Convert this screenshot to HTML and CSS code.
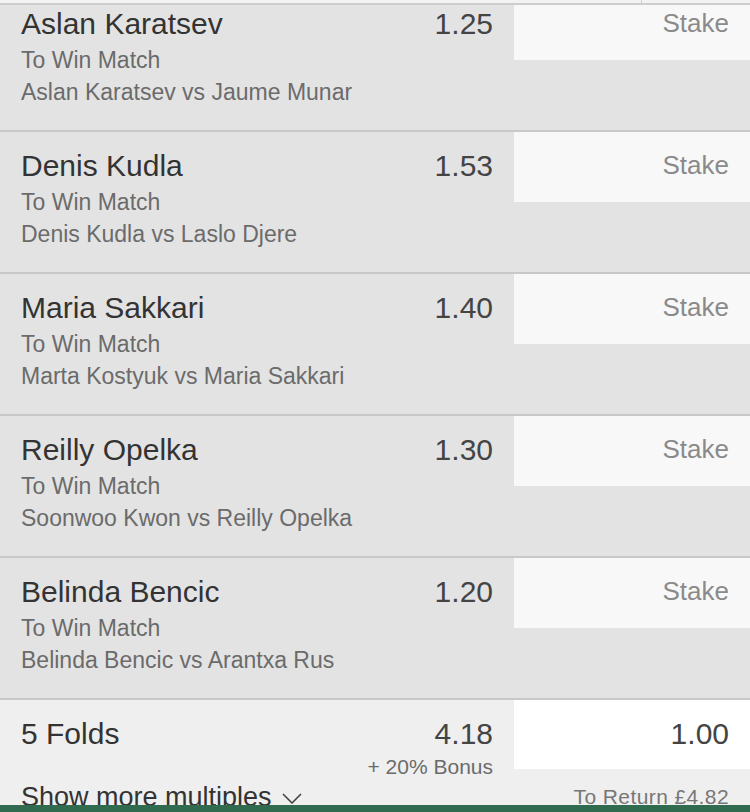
FILE: index.html
```html
<!DOCTYPE html>
<html lang="en">
<head>
    <meta charset="UTF-8">
    <meta name="viewport" content="width=device-width, initial-scale=1.0">
    <title>Bet Slip</title>
    <link rel="stylesheet" href="styles.css">
</head>
<body>

<div class="slip-top"><span class="slip-top-divider"></span></div>

<div class="slip">
    <div class="bet">
        <div class="bet-info">
            <div class="bet-line">
                <span class="selection">Aslan Karatsev</span>
                <span class="odds">1.25</span>
            </div>
            <div class="market">To Win Match</div>
            <div class="event">Aslan Karatsev vs Jaume Munar</div>
        </div>
        <div class="stake">Stake</div>
    </div>

    <div class="bet">
        <div class="bet-info">
            <div class="bet-line">
                <span class="selection">Denis Kudla</span>
                <span class="odds">1.53</span>
            </div>
            <div class="market">To Win Match</div>
            <div class="event">Denis Kudla vs Laslo Djere</div>
        </div>
        <div class="stake">Stake</div>
    </div>

    <div class="bet">
        <div class="bet-info">
            <div class="bet-line">
                <span class="selection">Maria Sakkari</span>
                <span class="odds">1.40</span>
            </div>
            <div class="market">To Win Match</div>
            <div class="event">Marta Kostyuk vs Maria Sakkari</div>
        </div>
        <div class="stake">Stake</div>
    </div>

    <div class="bet">
        <div class="bet-info">
            <div class="bet-line">
                <span class="selection">Reilly Opelka</span>
                <span class="odds">1.30</span>
            </div>
            <div class="market">To Win Match</div>
            <div class="event">Soonwoo Kwon vs Reilly Opelka</div>
        </div>
        <div class="stake">Stake</div>
    </div>

    <div class="bet">
        <div class="bet-info">
            <div class="bet-line">
                <span class="selection">Belinda Bencic</span>
                <span class="odds">1.20</span>
            </div>
            <div class="market">To Win Match</div>
            <div class="event">Belinda Bencic vs Arantxa Rus</div>
        </div>
        <div class="stake">Stake</div>
    </div>

    <div class="multiple">
        <div class="multiple-main">
            <div class="multiple-info">
                <div class="bet-line">
                    <span class="selection">5 Folds</span>
                    <span class="odds">4.18</span>
                </div>
                <div class="bonus">+ 20% Bonus</div>
            </div>
            <div class="stake stake-filled">1.00</div>
        </div>
        <div class="multiple-footer">
            <span class="more">Show more multiples<svg class="chevron" width="20" height="11" viewBox="0 0 20 11">
                    <path d="M1 1 L10 10 L19 1" fill="none" stroke="#444" stroke-width="1.6"/>
                </svg></span>
            <span class="returns">To Return £4.82</span>
        </div>
    </div>
</div>

<div class="action-bar"></div>

</body>
</html>
```

FILE: styles.css
```css
body {
    font-family: "Liberation Sans", Arial, sans-serif;
    background-color: #efefef;
    margin: 0;
    padding: 0;
    overflow: hidden;
}

/* header edge pinned over the scrolled list */
.slip-top {
    position: fixed;
    top: 0;
    left: 0;
    right: 0;
    height: 3px;
    background-color: #f3f3f3;
    border-bottom: 2px solid #cdcdcd;
    z-index: 2;
}

.slip-top-divider {
    position: absolute;
    left: 641px;
    top: 0;
    width: 1px;
    height: 3px;
    background-color: #cdcdcd;
}

.slip {
    margin-top: -10px;
}

.bet {
    display: flex;
    height: 140px;
    background-color: #e3e3e3;
    border-bottom: 2px solid #c8c8c8;
}

.bet-info {
    flex: 1;
    padding: 16px 21px 0 21px;
}

.bet-line {
    display: flex;
    justify-content: space-between;
    align-items: baseline;
    font-size: 30px;
    line-height: 36px;
}

.selection {
    color: #333;
}

.odds {
    color: #444;
}

.market,
.event {
    font-size: 23px;
    line-height: 32px;
    color: #6b6b6b;
}

.market {
    margin-top: 2px;
}

.stake {
    width: 215px;
    height: 52px;
    padding: 18px 21px 0 0;
    background-color: #f8f8f8;
    text-align: right;
    font-size: 26px;
    line-height: 30px;
    color: #8a8a8a;
}

.multiple {
    background-color: #efefef;
}

.multiple-main {
    display: flex;
    align-items: flex-start;
}

.multiple-info {
    flex: 1;
    padding: 16px 21px 0 21px;
}

.bonus {
    margin-top: 2px;
    text-align: right;
    font-size: 21px;
    line-height: 26px;
    color: #6b6b6b;
}

.stake-filled {
    height: 53px;
    padding-top: 16px;
    background-color: #fff;
    font-size: 30px;
    line-height: 36px;
    color: #444;
}

.multiple-footer {
    display: flex;
    justify-content: space-between;
    align-items: baseline;
    margin-top: 1px;
    padding: 0 21px;
}

.more {
    font-size: 27px;
    line-height: 32px;
    color: #333;
}

.chevron {
    margin-left: 10px;
    vertical-align: 2px;
}

.returns {
    position: relative;
    top: -2px;
    font-size: 21px;
    letter-spacing: 0.4px;
    color: #777;
}

.action-bar {
    position: fixed;
    left: 0;
    right: 0;
    bottom: 0;
    height: 7px;
    background-color: #306a4f;
}
```
